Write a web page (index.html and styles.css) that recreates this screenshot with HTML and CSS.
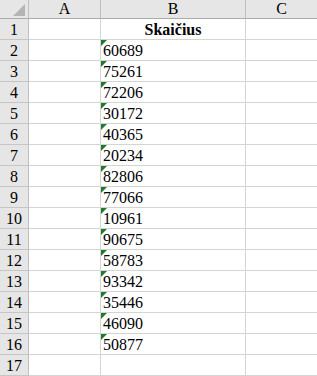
FILE: index.html
```html
<!DOCTYPE html>
<html lang="lt">
<head>
    <meta charset="UTF-8">
    <meta name="viewport" content="width=device-width, initial-scale=1.0">
    <title>Skaičius</title>
    <link rel="stylesheet" href="styles.css">
</head>
<body>
    <div class="sheet">
        <div class="corner"><span class="corner-mark"></span></div>
        <div class="col-head">A</div>
        <div class="col-head">B</div>
        <div class="col-head">C</div>

        <div class="row-head">1</div>
        <div class="cell"></div>
        <div class="cell title">Skaičius</div>
        <div class="cell"></div>

        <div class="row-head">2</div>
        <div class="cell"></div>
        <div class="cell num"><span class="flag"></span>60689</div>
        <div class="cell"></div>

        <div class="row-head">3</div>
        <div class="cell"></div>
        <div class="cell num"><span class="flag"></span>75261</div>
        <div class="cell"></div>

        <div class="row-head">4</div>
        <div class="cell"></div>
        <div class="cell num"><span class="flag"></span>72206</div>
        <div class="cell"></div>

        <div class="row-head">5</div>
        <div class="cell"></div>
        <div class="cell num"><span class="flag"></span>30172</div>
        <div class="cell"></div>

        <div class="row-head">6</div>
        <div class="cell"></div>
        <div class="cell num"><span class="flag"></span>40365</div>
        <div class="cell"></div>

        <div class="row-head">7</div>
        <div class="cell"></div>
        <div class="cell num"><span class="flag"></span>20234</div>
        <div class="cell"></div>

        <div class="row-head">8</div>
        <div class="cell"></div>
        <div class="cell num"><span class="flag"></span>82806</div>
        <div class="cell"></div>

        <div class="row-head">9</div>
        <div class="cell"></div>
        <div class="cell num"><span class="flag"></span>77066</div>
        <div class="cell"></div>

        <div class="row-head">10</div>
        <div class="cell"></div>
        <div class="cell num"><span class="flag"></span>10961</div>
        <div class="cell"></div>

        <div class="row-head">11</div>
        <div class="cell"></div>
        <div class="cell num"><span class="flag"></span>90675</div>
        <div class="cell"></div>

        <div class="row-head">12</div>
        <div class="cell"></div>
        <div class="cell num"><span class="flag"></span>58783</div>
        <div class="cell"></div>

        <div class="row-head">13</div>
        <div class="cell"></div>
        <div class="cell num"><span class="flag"></span>93342</div>
        <div class="cell"></div>

        <div class="row-head">14</div>
        <div class="cell"></div>
        <div class="cell num"><span class="flag"></span>35446</div>
        <div class="cell"></div>

        <div class="row-head">15</div>
        <div class="cell"></div>
        <div class="cell num"><span class="flag"></span>46090</div>
        <div class="cell"></div>

        <div class="row-head">16</div>
        <div class="cell"></div>
        <div class="cell num"><span class="flag"></span>50877</div>
        <div class="cell"></div>

        <div class="row-head">17</div>
        <div class="cell"></div>
        <div class="cell"></div>
        <div class="cell"></div>
    </div>
</body>
</html>
```

FILE: styles.css
```css
body {
    margin: 0;
    background-color: #fff;
    font-family: "Liberation Serif", "Times New Roman", serif;
    font-size: 16px;
    color: #000;
    overflow: hidden;
}
.sheet {
    display: grid;
    grid-template-columns: 29px 72px 145px 72px;
    grid-template-rows: 19px repeat(17, 21px);
}
.corner,
.col-head,
.row-head,
.cell {
    box-sizing: border-box;
    border-right: 1px solid #d4d4d4;
    border-bottom: 1px solid #d4d4d4;
}
.corner {
    position: relative;
    background-color: #e6e6e6;
    border-right-color: #bfbfbf;
    border-bottom-color: #ababab;
}
.corner-mark {
    position: absolute;
    right: 3px;
    bottom: 2px;
    width: 0;
    height: 0;
    border-left: 12px solid transparent;
    border-bottom: 12px solid #b4b4b4;
}
.col-head {
    background-color: #e6e6e6;
    border-right-color: #bfbfbf;
    border-bottom-color: #ababab;
    text-align: center;
    line-height: 18px;
}
.row-head {
    background-color: #e6e6e6;
    border-right-color: #bfbfbf;
    border-bottom-color: #c6c6c6;
    text-align: center;
    line-height: 22px;
}
.cell {
    line-height: 22px;
    padding-left: 2px;
    white-space: nowrap;
}
.title {
    font-weight: bold;
    text-align: center;
    padding-left: 0;
}
.num {
    position: relative;
}
.flag {
    position: absolute;
    left: 0;
    top: 0;
    width: 0;
    height: 0;
    border-top: 6px solid #1f7a2e;
    border-right: 6px solid transparent;
}
```
